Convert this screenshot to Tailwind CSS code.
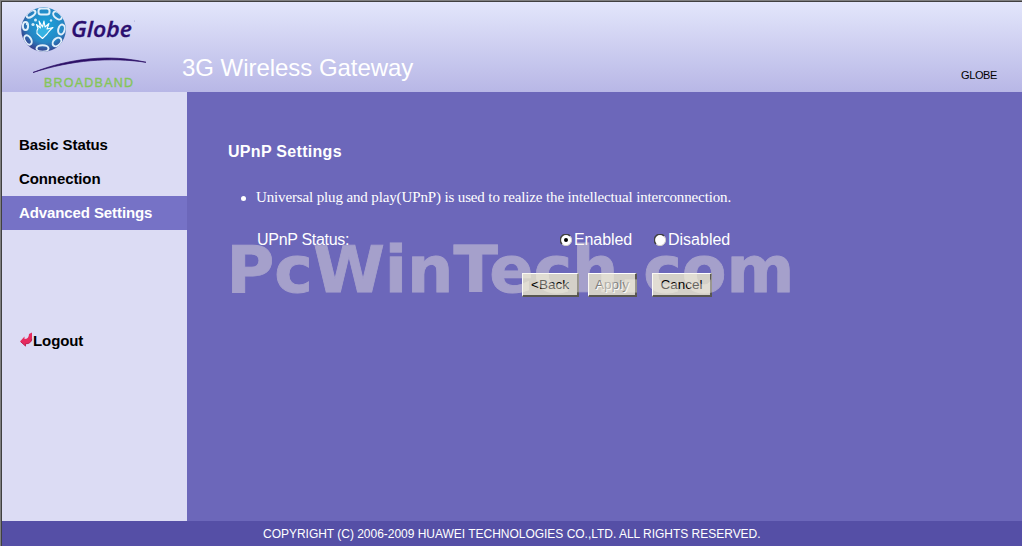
<!DOCTYPE html>
<html lang="en">
<head>
    <meta charset="UTF-8">
    <meta name="viewport" content="width=device-width, initial-scale=1.0">
    <title>3G Wireless Gateway</title>
    <script src="https://cdn.jsdelivr.net/npm/@tailwindcss/browser@4"></script>
</head>
<body class="h-[546px] overflow-hidden border-t border-l border-[#808080] bg-[#6c67ba] font-['Liberation_Sans',Arial,sans-serif]">
    <div class="flex h-[545px] flex-col border-t border-l border-[#404040]">
        <!-- Header -->
        <header class="flex h-[90px] shrink-0 bg-linear-to-b from-[#e3e6fb] to-[#b8b7e6]">
            <svg class="h-[90px] w-[180px] shrink-0" viewBox="2 2 180 90">
                <defs>
                    <radialGradient id="ball" cx="0.55" cy="0.4" r="0.65">
                        <stop offset="0" stop-color="#18a4dc" />
                        <stop offset="0.6" stop-color="#2687c4" />
                        <stop offset="1" stop-color="#3a2f80" />
                    </radialGradient>
                    <clipPath id="ball-clip"><circle cx="43.5" cy="29.5" r="22.3" /></clipPath>
                </defs>
                <circle cx="43.5" cy="29.5" r="22.3" fill="url(#ball)" />
                <g clip-path="url(#ball-clip)" fill="none" stroke="#e0effa" stroke-width="2">
                    <rect x="38.500" y="8.500" width="11" height="6" rx="2.500" />
                    <ellipse cx="57.500" cy="15.500" rx="3" ry="5" transform="rotate(-50 57.500 15.500)" />
                    <ellipse cx="31" cy="14" rx="5" ry="2.600" transform="rotate(-35 31 14)" />
                    <ellipse cx="25.500" cy="26" rx="2.600" ry="4" />
                    <ellipse cx="61.500" cy="29.500" rx="3.200" ry="5" transform="rotate(15 61.500 29.500)" />
                    <ellipse cx="28" cy="40" rx="3.200" ry="5" transform="rotate(-30 28 40)" />
                    <ellipse cx="42.500" cy="48.500" rx="6" ry="3.200" />
                    <ellipse cx="57" cy="42" rx="5" ry="3.500" transform="rotate(-45 57 42)" />
                </g>
                <g fill="#d5ecf8">
                    <circle cx="35.500" cy="20" r="1.500" />
                    <circle cx="33" cy="24.500" r="1.600" />
                    <circle cx="27" cy="24" r="1.200" />
                    <circle cx="51" cy="20.500" r="1.200" />
                </g>
                <path d="M36.500 24.500l4 3.500-1.500-7 3.500 6 1.500-6 1 6 4-3.500-2 5.500 6-1.500c-3 2-4 4-6 6.500l-4.500 4.500-5.500-5c-0.500-2 0-4 1-5z" fill="#35b2e2" stroke="#fff" stroke-width="1.100" stroke-linejoin="round" />
                <text x="71" y="37" textLength="61" lengthAdjust="spacingAndGlyphs" fill="#2b0f70" stroke="#2b0f70" stroke-width="0.300" class="font-['Open_Sans','Noto_Sans',sans-serif] text-[22px] font-semibold italic">Globe</text>
                <circle cx="134.500" cy="21" r="0.500" fill="#9a9acb" />
                <path d="M33 72.500C70 58 110 54 146 62.300C110 57 72 60 33 72.500z" fill="#2b0f66" stroke="#2b0f66" stroke-width="0.700" />
                <text x="44" y="87" textLength="89" fill="#85c559" stroke="#85c559" stroke-width="0.350" class="text-[12.500px]">BROADBAND</text>
            </svg>
            <h1 class="pt-[48px] text-2xl leading-9 tracking-[-0.04px] whitespace-nowrap text-white">3G Wireless Gateway</h1>
            <span class="mr-[25px] ml-auto pt-[65px] text-[11px] leading-4 tracking-[-0.4px] text-black">GLOBE</span>
        </header>

        <div class="flex min-h-0 flex-1">
            <!-- Sidebar -->
            <nav class="flex w-[185px] shrink-0 flex-col bg-[#dcdcf4] pt-9 text-[15px] font-bold tracking-[-0.1px] text-black">
                <a class="h-[34px] pl-[17px] leading-[34px]">Basic Status</a>
                <a class="h-[34px] pl-[17px] leading-[34px]">Connection</a>
                <a class="h-[34px] bg-[#7672c6] pl-[17px] leading-[34px] text-white">Advanced Settings</a>
                <a class="mt-[94px] flex h-[34px] items-center pl-[18px]">
                    <svg class="mb-[3px] h-[15px] w-[13px]" viewBox="0 0 13 15">
                        <path d="M0 9.500L4.500 4.500v2.500c3 0 4.500-2 4.500-5l3-1.500v5.500c0 3.500-2.500 6-6 6l0 2.500z" fill="#e62a5e" />
                        <path d="M1 10l4.500 4v-2.200c3.500 0 6-1.500 6.300-5" fill="none" stroke="#c02454" />
                    </svg>
                    <span>Logout</span>
                </a>
            </nav>

            <!-- Content -->
            <main class="relative flex-1 pl-[41px] text-white">
                <h2 class="pt-[50px] text-base leading-5 font-bold tracking-[0.3px]">UPnP Settings</h2>
                <div class="mt-[25px] flex items-center pl-[13px] font-['Liberation_Serif','Times_New_Roman',serif] text-[15px] leading-5 tracking-[-0.135px]">
                    <span class="mt-[2px] mr-[10px] size-[5px] rounded-full bg-white"></span>
                    <p class="whitespace-nowrap">Universal plug and play(UPnP) is used to realize the intellectual interconnection.</p>
                </div>
                <div class="mt-[23px] flex items-center pl-[29px] text-base leading-5">
                    <span class="w-[303px] tracking-[-0.3px]">UPnP Status:</span>
                    <label class="flex w-[94px] items-center gap-[2px] tracking-[-0.1px]">
                        <svg class="size-3 shrink-0" viewBox="0 0 12 12">
                            <circle cx="6" cy="6" r="5.500" fill="#fff" />
                            <path d="M2 10A5.500 5.500 0 0 1 10 2" fill="none" stroke="#404040" stroke-width="1.500" />
                            <path d="M10 2A5.500 5.500 0 0 1 2 10" fill="none" stroke="#d4d0c8" />
                            <circle cx="6" cy="6" r="2" fill="#000" />
                        </svg>
                        Enabled
                    </label>
                    <label class="flex items-center gap-[2px]">
                        <svg class="size-3 shrink-0" viewBox="0 0 12 12">
                            <circle cx="6" cy="6" r="5.500" fill="#fff" />
                            <path d="M2 10A5.500 5.500 0 0 1 10 2" fill="none" stroke="#404040" stroke-width="1.500" />
                            <path d="M10 2A5.500 5.500 0 0 1 2 10" fill="none" stroke="#d4d0c8" />
                        </svg>
                        Disabled
                    </label>
                </div>
                <div class="mt-[23px] flex pl-[294px] text-[13.500px] leading-5 text-black">
                    <button class="h-6 w-[57px] border-t border-r-2 border-b-2 border-l border-t-white border-r-[#595752] border-b-[#595752] border-l-white bg-[#d4d0c8]">&lt;Back</button>
                    <button class="ml-[9px] h-6 w-[49px] border-t border-r-2 border-b-2 border-l border-t-white border-r-[#595752] border-b-[#595752] border-l-white bg-[#d4d0c8] text-[#808080] text-shadow-[1px_1px_0_#fff]">Apply</button>
                    <button class="ml-[15px] h-6 w-[60px] border-t border-r-2 border-b-2 border-l border-t-white border-r-[#595752] border-b-[#595752] border-l-white bg-[#d4d0c8]">Cancel</button>
                </div>

                <!-- Watermark -->
                <svg class="pointer-events-none absolute top-[138px] left-[41px] h-[76px] w-[570px] opacity-42" viewBox="228 230 570 76">
                    <text x="226.500" y="292" textLength="568" lengthAdjust="spacingAndGlyphs" fill="#f5f0e4" stroke="#f5f0e4" stroke-width="0.800" class="font-['DejaVu_Sans',Verdana,sans-serif] text-[64px] font-bold">PcWinTech.com</text>
                </svg>
            </main>
        </div>

        <footer class="h-[25px] shrink-0 bg-[#554fa6] pt-px pl-[261px] text-xs leading-6 tracking-[-0.02px] whitespace-nowrap text-white">COPYRIGHT (C) 2006-2009 HUAWEI TECHNOLOGIES CO.,LTD. ALL RIGHTS RESERVED.</footer>
    </div>
</body>
</html>
